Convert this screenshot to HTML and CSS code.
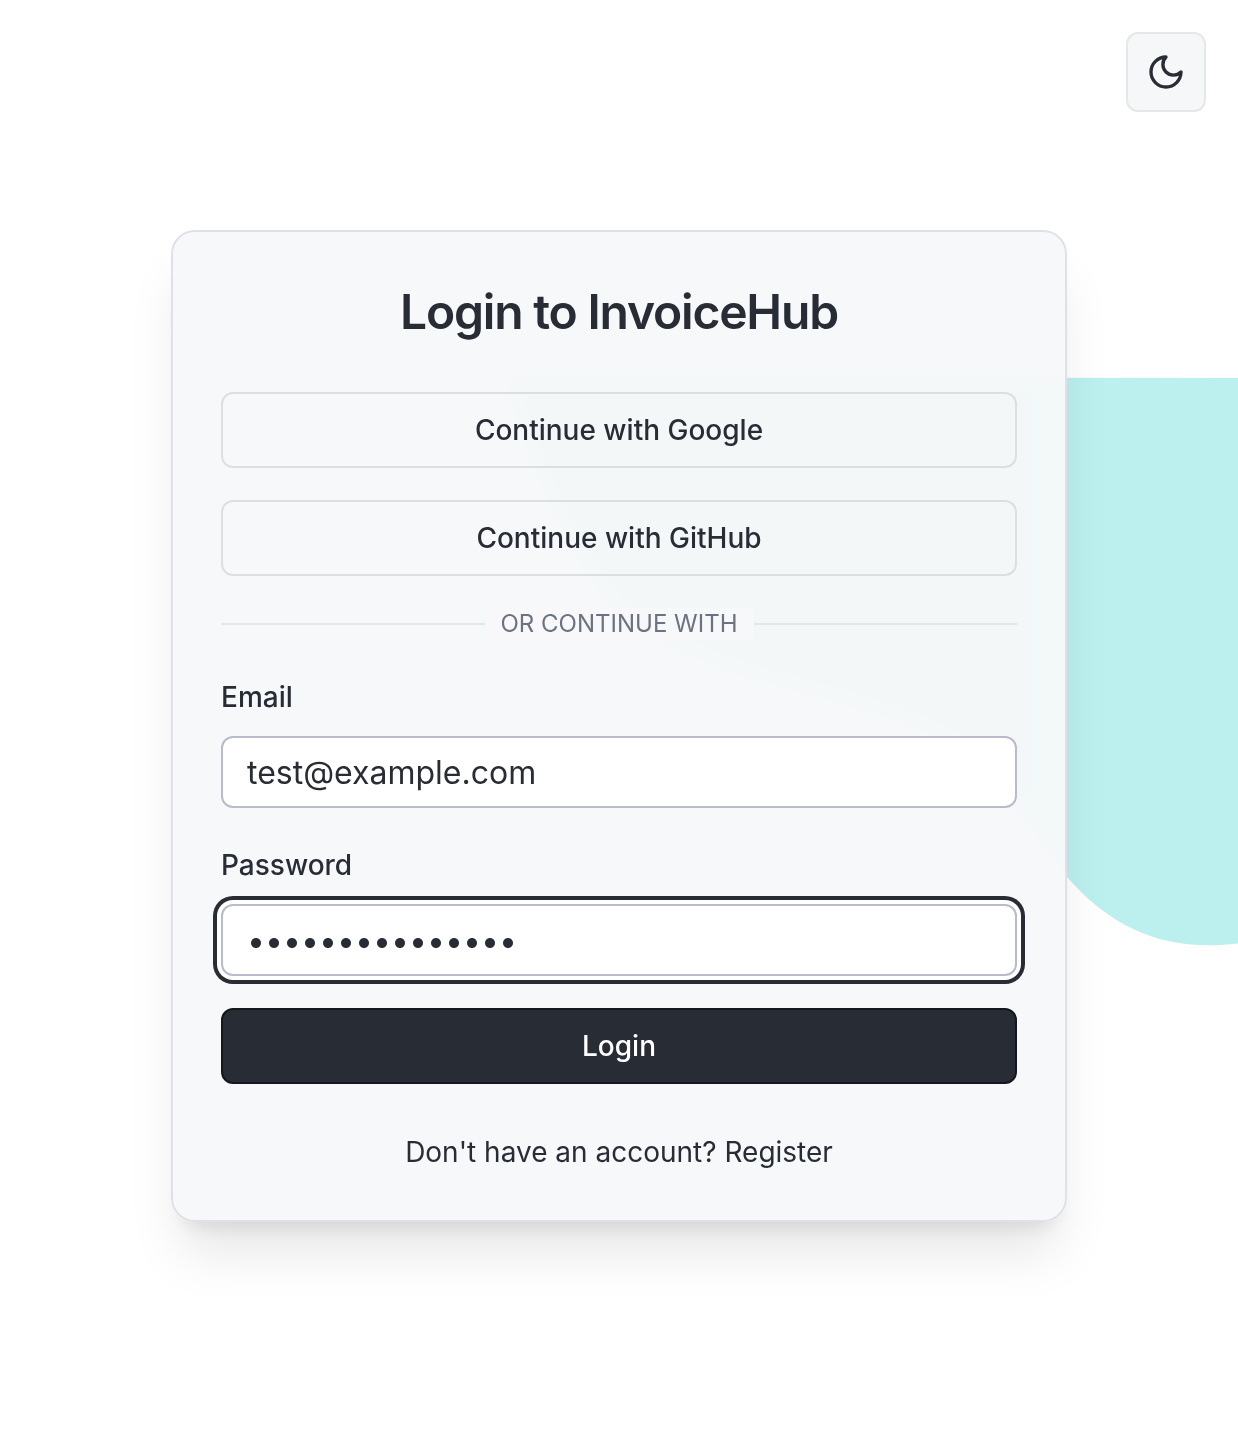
FILE: index.html
```html
<!DOCTYPE html>
<html lang="en">
<head>
<meta charset="utf-8">
<title>Login to InvoiceHub</title>
<link rel="stylesheet" href="styles.css">
</head>
<body>
<svg class="blob" viewBox="0 0 1238 1452" aria-hidden="true">
  <defs>
    <linearGradient id="tint" gradientUnits="userSpaceOnUse" x1="505" y1="0" x2="1060" y2="0">
      <stop offset="0" stop-color="#bbefd2"/>
      <stop offset="0.9" stop-color="#bbefd8"/>
      <stop offset="1" stop-color="#bbf0ef"/>
    </linearGradient>
  </defs>
  <path d="M505 377 L1238 378 V943.500 C1205 947.500 1167 945.500 1133 929 C1108 917 1086 899 1067 877 C1035 840 1010 786 960 750 C900 713 820 700 740 675 C690 657 645 640 606 600 C556 535 524 450 505 377 Z" fill="url(#tint)"/>
</svg>
<header class="topbar">
  <button class="theme-toggle" aria-label="Toggle theme">
    <svg class="moon" viewBox="0 0 24 24" fill="none" stroke="currentColor" stroke-width="2" stroke-linecap="round" stroke-linejoin="round"><path d="M12 3a6 6 0 0 0 9 9 9 9 0 1 1-9-9Z"/></svg>
  </button>
</header>
<main class="card">
  <h1 class="title">Login to InvoiceHub</h1>
  <div class="stack">
    <button class="btn btn-outline">Continue with Google</button>
    <button class="btn btn-outline">Continue with GitHub</button>
    <div class="divider"><span class="divider-text">Or continue with</span></div>
    <div class="field">
      <label class="label" for="email">Email</label>
      <input class="input" id="email" type="text" value="test@example.com">
    </div>
    <div class="field">
      <span class="label">Password</span>
      <div class="input input-focus"><span class="mask">•••••••••••••••</span></div>
    </div>
    <button class="btn btn-primary">Login</button>
  </div>
  <p class="footer">Don't have an account? <a class="link" href="#">Register</a></p>
</main>
</body>
</html>
```
FILE: styles.css
```css
* {
  box-sizing: border-box;
}

body {
  margin: 0;
  min-height: 1452px;
  background: #fff;
  color: #282c35;
  font-family: Inter, "Liberation Sans", sans-serif;
  overflow: hidden;
}

.blob {
  position: absolute;
  inset: 0;
  width: 1238px;
  height: 1452px;
  z-index: -1;
}

.topbar {
  display: flex;
  justify-content: flex-end;
  height: 230px;
  padding: 32px;
}

.theme-toggle {
  display: flex;
  align-items: center;
  justify-content: center;
  width: 80px;
  height: 80px;
  padding: 0;
  border: 2px solid #e5e7eb;
  border-radius: 12px;
  background: #f6f7f9;
  color: #282c35;
}

.moon {
  width: 40px;
  height: 40px;
}

.card {
  width: 896px;
  height: 992px;
  margin: 0 auto;
  padding: 48px;
  border: 2px solid #dfe1e7;
  border-radius: 24px;
  background: rgba(246, 248, 250, 0.94);
  background-clip: padding-box;
  backdrop-filter: blur(8px);
  box-shadow: 0 40px 54px -10px rgba(0, 0, 0, 0.1), 0 16px 20px -12px rgba(0, 0, 0, 0.1);
}

.title {
  margin: 0 0 48px;
  font-size: 48px;
  font-weight: 600;
  line-height: 64px;
  letter-spacing: -1.2px;
  text-align: center;
}

.stack {
  display: flex;
  flex-direction: column;
  gap: 32px;
}

.btn {
  height: 76px;
  padding: 0;
  border-radius: 12px;
  font: 500 28px/40px Inter, sans-serif;
  color: #282c35;
}

.btn-outline {
  border: 2px solid rgba(0, 0, 0, 0.1);
  background: transparent;
}

.btn-primary {
  border: 2px solid #15171c;
  background: #282c35;
  color: #fff;
}

.divider {
  display: flex;
  align-items: center;
  height: 32px;
}

.divider::before,
.divider::after {
  content: "";
  flex: 1;
  height: 2px;
  background: #e4e7ea;
}

.divider-text {
  padding: 0 16px;
  background: rgba(247, 248, 250, 0.8);
  color: #6b7280;
  font-size: 24px;
  line-height: 32px;
  text-transform: uppercase;
}

.field {
  display: flex;
  flex-direction: column;
  gap: 16px;
}

.label {
  height: 48px;
  padding-top: 1px;
  font-size: 28px;
  font-weight: 500;
  line-height: 48px;
}

.input {
  display: flex;
  align-items: center;
  width: 100%;
  height: 72px;
  padding: 0 24px;
  border: 2px solid #b8bbca;
  border-radius: 12px;
  background: #fff;
  color: #282c35;
  font: 400 32px/48px Inter, sans-serif;
}

.input-focus {
  box-shadow: 0 0 0 4px #fff, 0 0 0 8px #282c35;
}

.mask {
  padding-top: 2px;
}

.footer {
  margin: 48px 0 0;
  font-size: 28px;
  line-height: 40px;
  text-align: center;
}

.link {
  color: inherit;
  text-decoration: none;
}
```
